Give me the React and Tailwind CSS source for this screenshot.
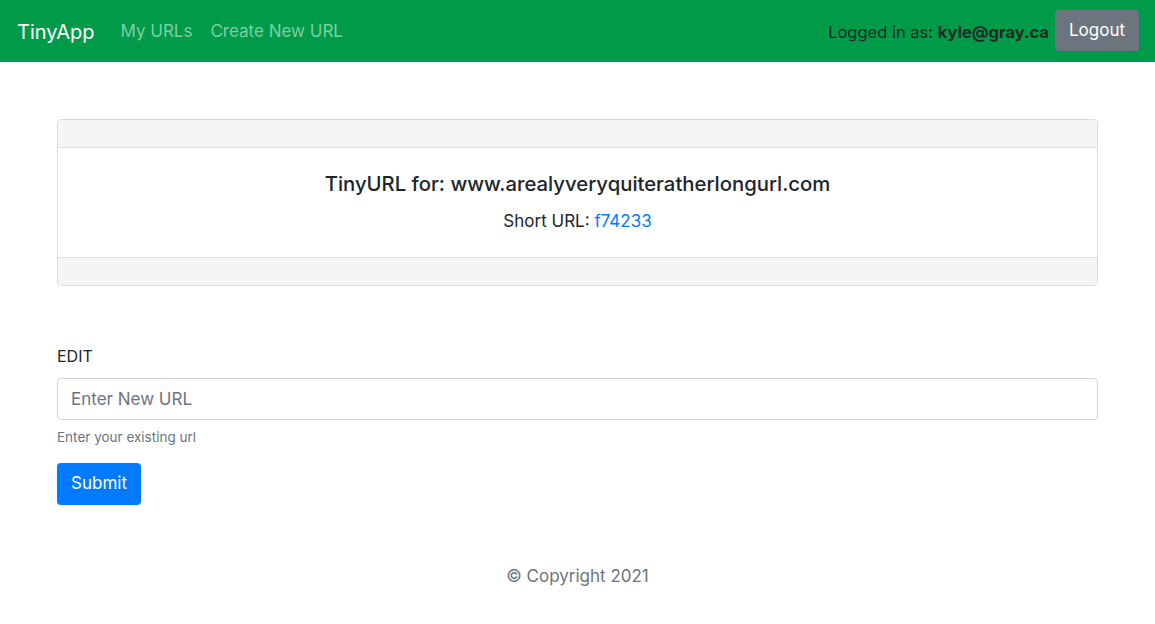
export default function App() {
  return (
    <div className="min-h-screen bg-white text-[#212529]" style={{ fontFamily: "Inter, 'Noto Sans', sans-serif" }}>
      <nav className="h-[62px] bg-[#009b48] flex items-center justify-between pl-[17px] pr-[16px]">
        <div className="flex items-center pt-[2px]">
          <span className="text-white text-[20px] mr-[26px]">TinyApp</span>
          <span className="text-[#7fcda3] text-[17px] mr-[18px]">My URLs</span>
          <span className="text-[#7fcda3] text-[17px]">Create New URL</span>
        </div>
        <div className="flex items-center">
          <span className="text-[16.5px] text-[#1f2a25] mr-[6px] pt-[2px]">Logged in as: <b className="font-bold">kyle@gray.ca</b></span>
          <button className="h-[41px] px-[14px] rounded-[4px] bg-[#6c757d] text-white text-[17px] -mt-[1px]">Logout</button>
        </div>
      </nav>
      <main className="mx-[57px] pt-[57px]">
        <div className="border border-[#dcdcdc] rounded-[4px] overflow-hidden">
          <div className="h-[28px] bg-[#f5f5f5] border-b border-[#dcdcdc]"></div>
          <div className="h-[109px] flex flex-col items-center pt-[22px]">
            <h3 className="text-[20.3px] font-medium leading-[28px]">TinyURL for: www.arealyveryquiteratherlongurl.com</h3>
            <p className="text-[17px] mt-[11px]">Short URL: <a className="text-[#007bff]">f74233</a></p>
          </div>
          <div className="h-[28px] bg-[#f5f5f5] border-t border-[#dcdcdc]"></div>
        </div>
        <div className="mt-[58px]">
          <label className="block text-[16px] leading-[24px]">EDIT</label>
          <input
            className="mt-[10px] block w-full h-[42px] border border-[#ced4da] rounded-[4px] px-[13px] text-[17px] placeholder-[#6c757d] outline-none"
            placeholder="Enter New URL"
          />
          <p className="text-[13.5px] text-[#6c757d] mt-[7px] leading-[20px]">Enter your existing url</p>
          <button className="mt-[16px] h-[42px] w-[84px] rounded-[4px] bg-[#007bff] text-white text-[17px]">Submit</button>
        </div>
        <footer className="mt-[59px] text-center text-[#6c757d] text-[17px]">© Copyright 2021</footer>
      </main>
    </div>
  );
}
